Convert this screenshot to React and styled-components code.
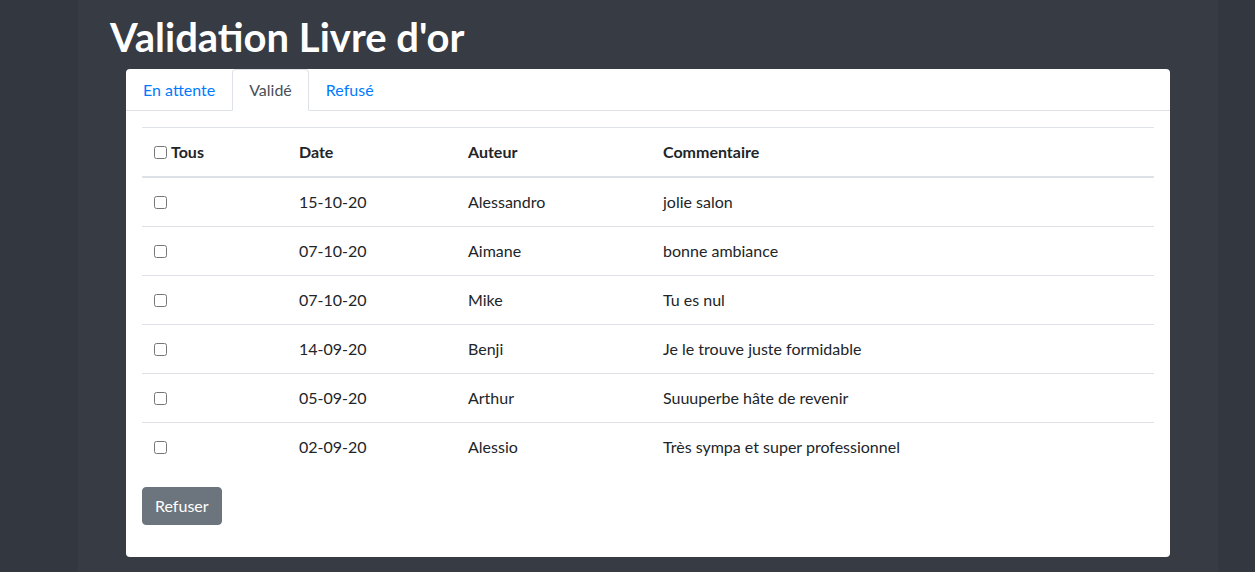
import React, { useState } from 'react';
import styled, { createGlobalStyle } from 'styled-components';

const GlobalStyle = createGlobalStyle`
  * { box-sizing: border-box; }
  body {
    margin: 0;
    background: #33373f;
    font-family: Lato, "Open Sans", sans-serif;
    font-size: 16px;
    line-height: 1.5;
    color: #212529;
  }
`;

const entries = [
  { date: '15-10-20', author: 'Alessandro', comment: 'jolie salon' },
  { date: '07-10-20', author: 'Aimane', comment: 'bonne ambiance' },
  { date: '07-10-20', author: 'Mike', comment: 'Tu es nul' },
  { date: '14-09-20', author: 'Benji', comment: 'Je le trouve juste formidable' },
  { date: '05-09-20', author: 'Arthur', comment: 'Suuuperbe hâte de revenir' },
  { date: '02-09-20', author: 'Alessio', comment: 'Très sympa et super professionnel' },
];

const tabs = ['En attente', 'Validé', 'Refusé'];

export default function App() {
  const [activeTab, setActiveTab] = useState(1);

  return (
    <Page>
      <GlobalStyle />
      <Container>
        <Title>Validation Livre d'or</Title>
        <Card>
          <Tabs>
            {tabs.map((tab, i) => (
              <Tab key={tab} $active={i === activeTab} onClick={() => setActiveTab(i)}>
                {tab}
              </Tab>
            ))}
          </Tabs>
          <CardBody>
            <Table>
              <colgroup>
                <col style={{ width: 145 }} />
                <col style={{ width: 169 }} />
                <col style={{ width: 195 }} />
                <col />
              </colgroup>
              <thead>
                <tr>
                  <Th>
                    <Check type="checkbox" id="all" />
                    <label htmlFor="all">Tous</label>
                  </Th>
                  <Th>Date</Th>
                  <Th>Auteur</Th>
                  <Th>Commentaire</Th>
                </tr>
              </thead>
              <tbody>
                {entries.map((row, i) => (
                  <tr key={row.date + row.author}>
                    <Td $first={i === 0}><Check type="checkbox" /></Td>
                    <Td $first={i === 0}>{row.date}</Td>
                    <Td $first={i === 0}>{row.author}</Td>
                    <Td $first={i === 0}>{row.comment}</Td>
                  </tr>
                ))}
              </tbody>
            </Table>
            <Button type="button">Refuser</Button>
          </CardBody>
        </Card>
      </Container>
    </Page>
  );
}

// styles

const Page = styled.div`
  min-height: 572px;
`;

const Container = styled.div`
  width: 1140px;
  min-height: 572px;
  margin-left: 78px;
  padding: 13px 48px 15px 32px;
  background: #373b44;
`;

const Title = styled.h1`
  margin: 0 0 8px;
  font-size: 40px;
  font-weight: 700;
  line-height: 1.2;
  color: #fff;
`;

const Card = styled.div`
  margin-left: 16px;
  background: #fff;
  border-radius: 4px;
  overflow: hidden;
`;

const Tabs = styled.div`
  display: flex;
  border-bottom: 1px solid #dee2e6;
`;

const Tab = styled.div`
  margin-bottom: -1px;
  padding: 8px 16px;
  border: 1px solid transparent;
  border-color: ${props => (props.$active ? '#dee2e6 #dee2e6 #fff' : 'transparent')};
  border-radius: 4px 4px 0 0;
  background: ${props => (props.$active ? '#fff' : 'transparent')};
  color: ${props => (props.$active ? '#495057' : '#007bff')};
  cursor: pointer;
`;

const CardBody = styled.div`
  padding: 16px 16px 32px;
`;

const Table = styled.table`
  width: 100%;
  margin-bottom: 15px;
  border-collapse: collapse;
  table-layout: fixed;
`;

const Th = styled.th`
  height: 49px;
  padding: 12px;
  text-align: left;
  vertical-align: bottom;
  font-weight: 700;
  border-top: 1px solid #dee2e6;
  border-bottom: 2px solid #dee2e6;
  white-space: nowrap;
`;

const Td = styled.td`
  height: 49px;
  padding: 12px;
  vertical-align: top;
  border-top: ${props => (props.$first ? '0' : '1px solid #dee2e6')};
`;

const Check = styled.input`
  width: 13px;
  height: 13px;
  margin: 0 4px 0 0;
  vertical-align: -1px;
`;

const Button = styled.button`
  display: block;
  padding: 6px 12px;
  border: 1px solid #6c757d;
  border-radius: 4px;
  background: #6c757d;
  color: #fff;
  font-family: inherit;
  font-size: 16px;
  line-height: 1.5;
`;
